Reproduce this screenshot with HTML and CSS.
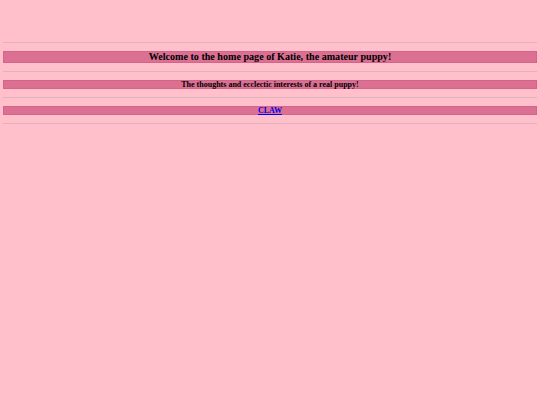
FILE: index.html
```html
<!DOCTYPE html>
<html>
<head>
<meta charset="utf-8">
<title>Katie, the amateur puppy</title>
<link rel="stylesheet" href="styles.css">
</head>
<body>
<div class="page">
  <hr class="rule">
  <div class="bar bar-title"><h1 class="title">Welcome to the home page of Katie, the amateur puppy!</h1></div>
  <hr class="rule">
  <div class="bar bar-sub"><h2 class="sub">The thoughts and ecclectic interests of a real puppy!</h2></div>
  <hr class="rule">
  <div class="bar bar-sub"><h2 class="sub"><a class="link" href="#">CLAW</a></h2></div>
  <hr class="rule">
</div>
</body>
</html>
```

FILE: styles.css
```css
html, body {
  margin: 0;
  padding: 0;
  background: #ffc0cb;
}
body {
  font-family: "Liberation Serif", "Times New Roman", serif;
  color: #000;
}
.page {
  padding: 42px 3px 0 3px;
  display: flex;
  flex-direction: column;
}
.rule {
  margin: 0;
  border: 0;
  height: 1px;
  background: #dcb4bc;
}
.bar {
  background: #db7093;
  display: flex;
  justify-content: center;
  align-items: center;
  box-shadow: inset 0 0 0 1px rgba(200, 90, 130, 0.5);
}
.bar-title {
  margin: 8px 0 8px;
  height: 12px;
}
.bar-sub {
  margin: 8px 0 8px;
  height: 9px;
}
.title {
  margin: 0;
  font-size: 10.1px;
  line-height: 12px;
  font-weight: bold;
}
.sub {
  margin: 0;
  font-size: 8px;
  line-height: 9px;
  font-weight: bold;
}
.link {
  color: #0000ee;
}
```
